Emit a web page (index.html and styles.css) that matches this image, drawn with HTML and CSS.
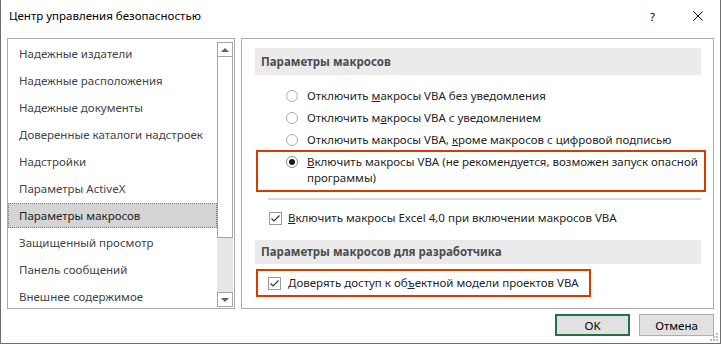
FILE: index.html
```html
<!DOCTYPE html>
<html lang="ru">
<head>
    <meta charset="UTF-8">
    <title>Центр управления безопасностью</title>
    <link rel="stylesheet" href="styles.css">
</head>
<body>
    <div class="window">
        <header class="titlebar">
            <span class="title">Центр управления безопасностью</span>
            <span class="caption-btn help">?</span>
            <span class="caption-btn close">
                <svg width="10" height="10" viewBox="0 0 10 10"><path d="M0.5 0.5 L9.5 9.5 M9.5 0.5 L0.5 9.5" stroke="#000" stroke-width="1" fill="none"/></svg>
            </span>
        </header>

        <main class="body">
            <nav class="nav">
                <ul class="nav-list">
                    <li>Надежные издатели</li>
                    <li>Надежные расположения</li>
                    <li>Надежные документы</li>
                    <li>Доверенные каталоги надстроек</li>
                    <li>Надстройки</li>
                    <li>Параметры ActiveX</li>
                    <li class="selected">Параметры макросов</li>
                    <li>Защищенный просмотр</li>
                    <li>Панель сообщений</li>
                    <li>Внешнее содержимое</li>
                </ul>
                <div class="scrollbar">
                    <div class="sb-btn"><span class="arrow-up"></span></div>
                    <div class="sb-thumb"></div>
                    <div class="sb-track"></div>
                    <div class="sb-btn"><span class="arrow-down"></span></div>
                </div>
            </nav>

            <section class="panel">
                <h2 class="group-title">Параметры макросов</h2>
                <div class="options">
                    <label class="option"><span class="radio"></span><span>Отключить <u>м</u>акросы VBA без уведомления</span></label>
                    <label class="option"><span class="radio"></span><span>Отключить м<u>а</u>кросы VBA с уведомлением</span></label>
                    <label class="option"><span class="radio"></span><span>Отключить макросы VBA, <u>к</u>роме макросов с цифровой подписью</span></label>
                    <div class="highlight highlight-wide">
                        <label class="option"><span class="radio checked"></span><span><u>В</u>ключить макросы VBA (не рекомендуется, возможен запуск опасной программы)</span></label>
                    </div>
                </div>
                <div class="separator"></div>
                <label class="check-row"><span class="checkbox"><svg width="9" height="7" viewBox="0 0 9 7"><path d="M0.5 3.5 L3 6 L8.5 0.5" stroke="#333" stroke-width="1.1" fill="none"/></svg></span><span><u>В</u>ключить макросы Excel 4,0 при включении макросов VBA</span></label>

                <h2 class="group-title dev">Параметры макросов для разработчика</h2>
                <div class="highlight highlight-narrow">
                    <label class="check-row"><span class="checkbox"><svg width="9" height="7" viewBox="0 0 9 7"><path d="M0.5 3.5 L3 6 L8.5 0.5" stroke="#333" stroke-width="1.1" fill="none"/></svg></span><span>Доверять доступ к об<u>ъ</u>ектной модели проектов VBA</span></label>
                </div>
            </section>
        </main>

        <footer class="buttons">
            <button class="btn btn-default">OK</button>
            <button class="btn">Отмена</button>
        </footer>

        <svg class="grip" width="9" height="9" viewBox="0 0 9 9">
            <rect x="6" y="0" width="2" height="2" fill="#bcbcbc"/>
            <rect x="3" y="3" width="2" height="2" fill="#bcbcbc"/>
            <rect x="6" y="3" width="2" height="2" fill="#bcbcbc"/>
            <rect x="0" y="6" width="2" height="2" fill="#bcbcbc"/>
            <rect x="3" y="6" width="2" height="2" fill="#bcbcbc"/>
            <rect x="6" y="6" width="2" height="2" fill="#bcbcbc"/>
        </svg>
    </div>
</body>
</html>
```

FILE: styles.css
```css
body {
    margin: 0;
    font-family: "Noto Sans", "Open Sans", sans-serif;
    font-size: 11.5px;
    color: #262626;
    background: #fff;
}

.window {
    position: relative;
    box-sizing: border-box;
    width: 721px;
    height: 344px;
    border: 1px solid #6e6e6e;
    border-top: none;
    display: flex;
    flex-direction: column;
    background: #fff;
}

/* Title bar */
.titlebar {
    height: 38px;
    display: flex;
    align-items: flex-start;
    flex: none;
}

.title {
    flex: 1;
    line-height: 32px;
    padding-left: 8px;
    color: #000;
}

.caption-btn {
    width: 45px;
    height: 32px;
    display: flex;
    align-items: center;
    justify-content: center;
    color: #000;
}

/* Main area */
.body {
    display: flex;
    gap: 6px;
    padding: 0 6px;
    height: 271px;
    flex: none;
}

.nav {
    box-sizing: border-box;
    width: 228px;
    border: 1px solid #ababab;
    display: flex;
}

.nav-list {
    list-style: none;
    margin: 0;
    padding: 1px 0 0;
    width: 209px;
}

.nav-list li {
    height: 27px;
    line-height: 27px;
    padding-left: 11px;
    color: #444;
    white-space: nowrap;
}

.nav-list li.selected {
    box-sizing: border-box;
    height: 25px;
    line-height: 23px;
    margin: 1px 0 1px;
    padding-left: 10px;
    background: #d4d4d4;
    border: 1px dotted #7a7a7a;
    color: #1e1e1e;
}

.scrollbar {
    width: 16px;
    margin: 3px 1px 1px 0;
    display: flex;
    flex-direction: column;
}

.sb-btn {
    box-sizing: border-box;
    height: 15px;
    border: 1px solid #a6a6a6;
    display: flex;
    align-items: center;
    justify-content: center;
    background: #fff;
}

.arrow-up {
    border-left: 4px solid transparent;
    border-right: 4px solid transparent;
    border-bottom: 4px solid #606060;
}

.arrow-down {
    border-left: 4px solid transparent;
    border-right: 4px solid transparent;
    border-top: 4px solid #606060;
}

.sb-thumb {
    box-sizing: border-box;
    height: 181px;
    border: 1px solid #a6a6a6;
    border-top: none;
    background: #fff;
}

.sb-track {
    flex: 1;
    background: #e6e6e6;
}

/* Right panel */
.panel {
    box-sizing: border-box;
    flex: 1;
    border: 1px solid #ababab;
    padding-top: 9px;
}

.group-title {
    margin: 0 12px 0 13px;
    height: 27px;
    line-height: 27px;
    padding-left: 6px;
    background: #ebebeb;
    font-size: 11.5px;
    font-weight: bold;
    color: #4d4d4d;
}

.group-title.dev {
    margin-top: 11px;
    height: 24px;
    line-height: 24px;
}

.options {
    margin-top: 10px;
}

.option {
    display: flex;
    align-items: flex-start;
    line-height: 16px;
    padding: 3px 0 3px 44px;
}

.radio {
    box-sizing: border-box;
    flex: none;
    width: 12px;
    height: 12px;
    margin: 2px 9px 0 0;
    border: 1px solid #ababab;
    border-radius: 50%;
    display: flex;
    align-items: center;
    justify-content: center;
}

.radio.checked {
    border-color: #8a8a8a;
}

.radio.checked::after {
    content: "";
    width: 6px;
    height: 6px;
    border-radius: 50%;
    background: #1a1a1a;
}

.highlight {
    border: 2px solid #d83b01;
}

.highlight-wide {
    margin: 0 7px 0 14px;
}

.options .option:nth-child(3) {
    padding-bottom: 2px;
}

.highlight-wide .option {
    padding: 2px 0 4px 28px;
}

.separator {
    height: 2px;
    margin: 6px 12px 0 26px;
    background: #dadada;
}

.check-row {
    display: flex;
    align-items: flex-start;
    line-height: 16px;
    padding: 3px 0 3px 27px;
    margin-top: 7px;
    white-space: nowrap;
}

.checkbox {
    box-sizing: border-box;
    flex: none;
    width: 13px;
    height: 13px;
    margin: 2px 6px 0 0;
    border: 1px solid #9a9a9a;
    display: flex;
    align-items: center;
    justify-content: center;
}

.highlight-narrow {
    width: 335px;
    box-sizing: border-box;
    margin: 5px 0 0 14px;
}

.highlight-narrow .check-row {
    margin-top: 0;
    padding: 4px 0 4px 10px;
}

.highlight-narrow .checkbox {
    margin-right: 7px;
}

/* Footer buttons */
.buttons {
    display: flex;
    justify-content: flex-end;
    gap: 9px;
    padding: 5px 6px 0;
}

.btn {
    box-sizing: border-box;
    width: 75px;
    height: 22px;
    padding: 0;
    border: 1px solid #adadad;
    background: #e1e1e1;
    font: inherit;
    color: #000;
}

.btn-default {
    border: 2px solid #217346;
}

.grip {
    position: absolute;
    right: 1px;
    bottom: 1px;
}
```
